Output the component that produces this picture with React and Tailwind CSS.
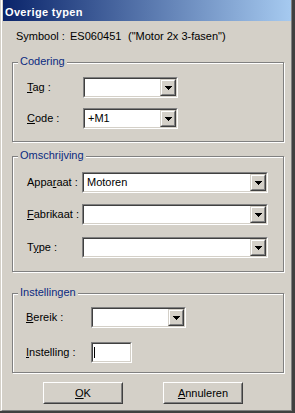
import React from 'react';

function Arrow() {
  return (
    <svg width="7" height="4" viewBox="0 0 7 4" shapeRendering="crispEdges">
      <path d="M0 0h7v1H0zM1 1h5v1H1zM2 2h3v1H2zM3 3h1v1H3z" fill="#000" />
    </svg>
  );
}

function Sunken({ className, children }) {
  return (
    <div className={`flex h-[21px] border border-[#808080] border-b-white border-r-white ${className}`}>
      <div className="flex flex-1 min-w-0 border border-[#404040] border-b-[#d4d0c8] border-r-[#d4d0c8] bg-white">
        {children}
      </div>
    </div>
  );
}

function Combo({ className, value }) {
  return (
    <Sunken className={className}>
      <div className="flex-1 flex items-center pl-[3px]">{value}</div>
      <div className="w-[16px] border border-[#d4d0c8] border-b-[#404040] border-r-[#404040]">
        <div className="h-full flex items-center justify-center pl-px pt-px bg-[#d4d0c8] border border-white border-b-[#808080] border-r-[#808080]">
          <Arrow />
        </div>
      </div>
    </Sunken>
  );
}

function GroupBox({ title, className, children }) {
  return (
    <div className={`relative ml-[9px] w-[272px] border border-[#808080] shadow-[inset_1px_1px_0_#fff,1px_1px_0_#fff] ${className}`}>
      <div className="absolute left-[5px] top-[-8px] px-[2px] bg-[#d4d0c8] text-[#0b2a80]">{title}</div>
      {children}
    </div>
  );
}

function Button({ children }) {
  return (
    <div className="w-[80px] h-[22px] border border-white border-b-[#404040] border-r-[#404040]">
      <div className="h-full flex items-center justify-center border border-[#d4d0c8] border-b-[#808080] border-r-[#808080]">
        {children}
      </div>
    </div>
  );
}

export default function App() {
  return (
    <div className="w-[295px] h-[413px] bg-[#d4d0c8] pl-px border-r-[3px] border-b-2 border-[#404040] font-['Liberation_Sans',Arial,sans-serif] text-[11px] leading-[13px] text-black">
      <div className="h-full flex flex-col border-l border-l-white border-r border-r-[#808080] border-b border-b-[#808080] pl-px">
        {/* title bar */}
        <div className="h-[21px] shrink-0 bg-linear-to-r/srgb from-[#0a246a] to-[#a6caf0] pl-[2px] pt-[6px] text-white font-bold tracking-[0.35px]">
          Overige typen
        </div>

        <div className="mt-[9px] pl-[13px] flex whitespace-pre">
          <span className="w-[54px]">Symbool :</span>
          <span className="w-[58px]">ES060451</span>
          <span>("Motor 2x 3-fasen")</span>
        </div>

        <GroupBox title="Codering" className="mt-[19px] h-[80px] pt-[14px] pl-[14px]">
          <div className="flex items-center">
            <span className="w-[56px]"><span className="underline">T</span>ag :</span>
            <Combo className="w-[95px]" value="" />
          </div>
          <div className="flex items-center mt-[10px]">
            <span className="w-[56px]"><span className="underline">C</span>ode :</span>
            <Combo className="w-[95px]" value="+M1" />
          </div>
        </GroupBox>

        <GroupBox title="Omschrijving" className="mt-[14px] h-[116px] pt-[15px] pl-[14px]">
          <div className="flex items-center">
            <span className="w-[55px]">Appa<span className="underline">r</span>aat :</span>
            <Combo className="w-[186px]" value="Motoren" />
          </div>
          <div className="flex items-center mt-[11px]">
            <span className="w-[55px]"><span className="underline">F</span>abrikaat :</span>
            <Combo className="w-[186px]" value="" />
          </div>
          <div className="flex items-center mt-[12px]">
            <span className="w-[55px]">T<span className="underline">y</span>pe :</span>
            <Combo className="w-[186px]" value="" />
          </div>
        </GroupBox>

        <GroupBox title="Instellingen" className="mt-[21px] h-[80px] pt-[13px] pl-[13px]">
          <div className="flex items-center">
            <span className="w-[65px]"><span className="underline">B</span>ereik :</span>
            <Combo className="w-[95px]" value="" />
          </div>
          <div className="flex items-center mt-[14px]">
            <span className="w-[65px]"><span className="underline">I</span>nstelling :</span>
            <Sunken className="w-[41px]">
              <div className="ml-[1px] mt-[3px] w-px h-[11px] bg-black" />
            </Sunken>
          </div>
        </GroupBox>

        <div className="mt-[9px] ml-[40px] flex gap-[40px]">
          <Button><span className="underline">O</span>K</Button>
          <Button><span className="underline">A</span>nnuleren</Button>
        </div>
      </div>
    </div>
  );
}
